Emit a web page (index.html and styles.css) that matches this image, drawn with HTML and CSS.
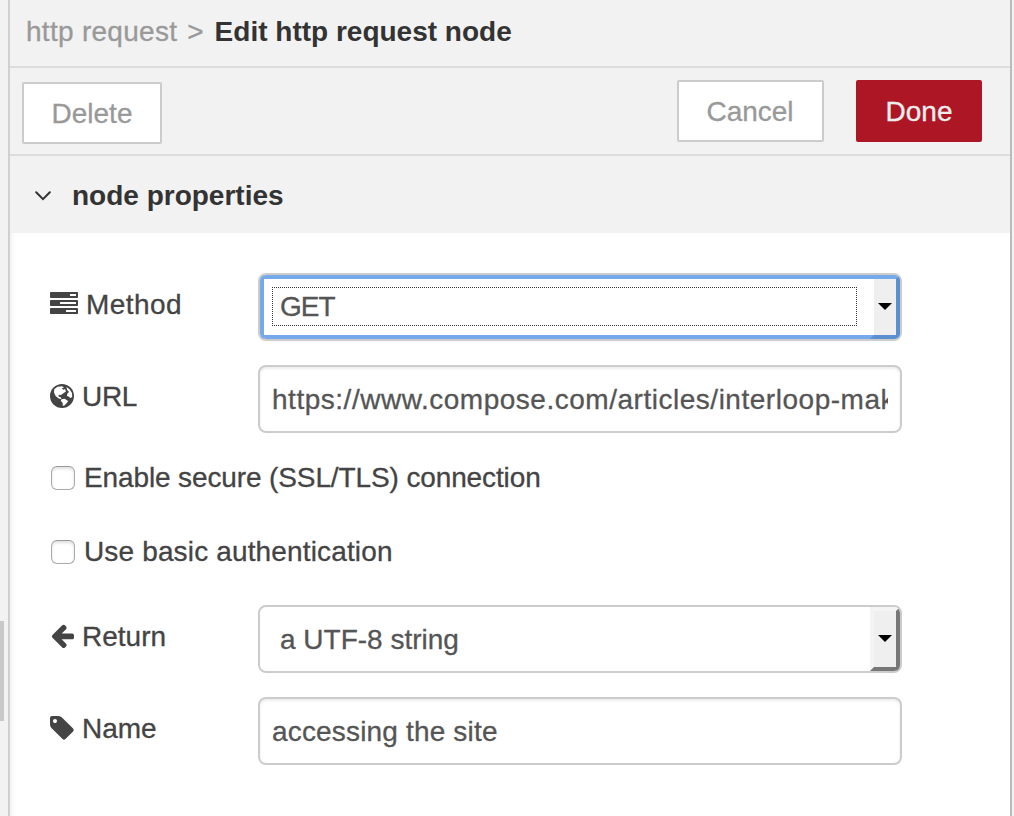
FILE: index.html
```html
<!DOCTYPE html>
<html lang="en">
<head>
<meta charset="utf-8">
<title>Edit http request node</title>
<link rel="stylesheet" href="styles.css">
</head>
<body>
<div class="app">
  <aside class="gutter"><div class="handle"></div></aside>
  <main class="tray">
    <header class="crumbs"><span class="crumb t-http">http request</span><span class="crumb sep">&gt;</span><span class="current">Edit http request node</span></header>
    <div class="toolbar">
      <button class="btn delete">Delete</button>
      <button class="btn cancel">Cancel</button>
      <button class="btn done">Done</button>
    </div>
    <div class="section">
      <svg class="chevron" viewBox="0 0 16 10"><path d="M1.2 1.3L8 8.2L14.8 1.3"/></svg>
      <span class="section-title">node properties</span>
    </div>
    <form class="form">
      <div class="row">
        <div class="label"><svg class="icon wide" viewBox="0 0 1792 1792"><path d="M1024 1408h640v-128h-640v128zm-384-512h1024v-128h-1024v128zm640-512h384v-128h-384v128zm512 832v256q0 26-19 45t-45 19h-1664q-26 0-45-19t-19-45v-256q0-26 19-45t45-19h1664q26 0 45 19t19 45zm0-512v256q0 26-19 45t-45 19h-1664q-26 0-45-19t-19-45v-256q0-26 19-45t45-19h1664q26 0 45 19t19 45zm0-512v256q0 26-19 45t-45 19h-1664q-26 0-45-19t-19-45v-256q0-26 19-45t45-19h1664q26 0 45 19t19 45z"/></svg><span class="t-method">Method</span></div>
        <div class="select focused"><div class="value"><span class="t-get">GET</span></div><div class="arrow"><i class="caret"></i></div></div>
      </div>
      <div class="row">
        <div class="label"><svg class="icon" viewBox="0 0 24 24"><circle cx="12" cy="12" r="12"/><path class="land" d="M4.2 5.2L7.5 2.8L12 2.2L14 3.4L11.6 4.6L13.4 5.8L15 5L16 7.4L13.4 9.2L11 11L8.6 10.8L8.6 12.4L10.8 13.2L11.4 15L8.6 14.4L5.6 12L4 8.6Z"/><path class="land" d="M16.4 3L19.6 5.2L22 9L22.2 13L20.4 14L18.6 12.4L17 12L17.4 9.4L19 8L17.2 6Z"/><path class="land" d="M11.4 15.2L14.6 14.8L18.2 17L16.4 19.4L14.4 21.4L12.6 21.8L12.8 19L10.8 17Z"/></svg><span class="t-url">URL</span></div>
        <div class="input"><span class="clip t-link">https://www.compose.com/articles/interloop-mak</span></div>
      </div>
      <div class="check first"><span class="box"></span><span class="t-ssl">Enable secure (SSL/TLS) connection</span></div>
      <div class="check second"><span class="box"></span><span class="t-auth">Use basic authentication</span></div>
      <div class="row">
        <div class="label"><svg class="icon" viewBox="64 128 1600 1600"><path d="M1664 896v128q0 53-32.5 90.5t-84.5 37.5h-704l293 294q38 36 38 90t-38 90l-75 76q-37 37-90 37-52 0-91-37l-651-652q-37-37-37-90 0-52 37-91l651-650q38-38 91-38 52 0 90 38l75 74q38 38 38 91t-38 91l-293 293h704q52 0 84.5 37.5t32.5 90.5z"/></svg><span class="t-return">Return</span></div>
        <div class="select"><div class="value"><span class="t-utf">a UTF-8 string</span></div><div class="arrow"><i class="caret"></i></div></div>
      </div>
      <div class="row">
        <div class="label"><svg class="icon" viewBox="128 128 1536 1536"><path d="M576 448q0-53-37.5-90.5t-90.5-37.5-90.5 37.5-37.5 90.5 37.5 90.5 90.5 37.5 90.5-37.5 37.5-90.5zm1067 576q0 53-37 90l-491 492q-39 37-91 37-53 0-90-37l-715-716q-38-37-64.5-101t-26.5-117v-416q0-52 38-90t90-38h416q53 0 117 26.5t102 64.5l715 714q37 39 37 91z"/></svg><span class="t-name">Name</span></div>
        <div class="input"><span class="clip t-site">accessing the site</span></div>
      </div>
    </form>
  </main>
  <div class="edge"></div>
</div>
</body>
</html>
```
FILE: styles.css
```css
* { box-sizing: border-box; }
body { margin: 0; font: 28px/34px "Liberation Sans", Arial, sans-serif; color: #444; background: #fff; -webkit-text-stroke: .3px; }
.app { display: flex; width: 1014px; height: 816px; overflow: hidden; }
.gutter { width: 10px; background: #f2f2f2; border-right: 2px solid #d0d0d0; padding-top: 621px; }
.handle { width: 4px; height: 100px; background: #c8c8c8; }
.tray { flex: 1; box-shadow: inset 6px 0 6px -5px rgba(0,0,0,.08); }
.edge { width: 4px; background: #f2f2f2; border-left: 2px solid #bbb; }
.crumbs { height: 68px; padding: 15px 0 0 16px; background: #f2f2f2; border-bottom: 2px solid #ddd; display: flex; white-space: nowrap; }
.crumb { color: #999; }
.sep { margin: 0 11px 0 10px; }
.current, .section-title { font-weight: bold; color: #333; -webkit-text-stroke: 0; }
.toolbar { height: 88px; padding: 12px 28px 0 12px; background: #f2f2f2; border-bottom: 2px solid #ddd; display: flex; }
.btn { height: 62px; padding: 1px 0 0; border: 2px solid #ccc; border-radius: 2px; background: #fff; color: #999; font: inherit; -webkit-text-stroke: .3px; }
.delete { width: 140px; margin-top: 2px; }
.cancel { width: 147px; margin-left: auto; padding-right: 1px; }
.done { width: 126px; margin-left: 32px; background: #ad1625; border-color: #ad1625; color: #eee; }
.section { height: 77px; padding: 2px 0 0 25px; background: #f2f2f2; display: flex; align-items: center; }
.chevron { width: 16px; height: 10px; margin-right: 21px; fill: none; stroke: #333; stroke-width: 2; stroke-linecap: round; }
.form { padding: 40px 0 0 40px; }
.row { display: flex; height: 68px; margin-bottom: 24px; }
.label { width: 208px; height: 62px; display: flex; align-items: center; white-space: nowrap; }
.label span { padding-top: 2px; }
.icon { width: 24px; height: 24px; margin-right: 8px; fill: #444; flex: none; }
.icon.wide { width: 28px; height: 28px; }
.land { fill: #fff; }
.input, .select { width: 644px; height: 68px; border: 2px solid #ccc; border-radius: 8px; background: #fff; color: #555; white-space: nowrap; }
.input { padding: 16px 12px 12px; box-shadow: inset 0 2px 3px rgba(0,0,0,.075); }
.clip { display: block; overflow: hidden; }
.select { display: flex; overflow: hidden; position: relative; }
.value { flex: 1; padding: 16px 0 0 20px; }
.arrow { width: 30px; border: 4px solid; border-color: #f4f4f4 #777 #777 #f4f4f4; background: #efefef; display: flex; align-items: center; justify-content: center; }
.caret { margin-top: -2px; border: 7px solid transparent; border-top-color: #000; border-bottom: 0; }
.focused .value { margin: 12px 13px 13px 12px; padding: 2px 0 0 7px; border: 1px dotted #333; }
.focused::after { content: ""; position: absolute; inset: 0; border: 4px solid #76a9ea; border-right-color: #5a8fd0; border-radius: 4px; }
.focused .arrow { border-color: #76a9ea #5a8fd0 #5a8fd0 transparent; background-clip: padding-box; position: relative; z-index: 1; border-radius: 0 4px 4px 0; }
.check { display: flex; align-items: center; height: 24px; white-space: nowrap; }
.box { width: 24px; height: 24px; margin: 0 9px 0 1px; border: 1px solid #aaa; border-top-color: #999; border-radius: 6px; background: #fff; box-shadow: inset 0 2px 3px rgba(0,0,0,.12); }
.first { margin: 33px 0 50px; }
.second { margin-bottom: 41px; }
.t-http { letter-spacing: .28px; }
.t-method { letter-spacing: .45px; }
.t-get { letter-spacing: -1px; }
.t-url { letter-spacing: -.3px; }
.t-link { letter-spacing: .52px; }
.t-ssl { letter-spacing: -.12px; }
.t-auth { letter-spacing: .15px; }
.t-site { letter-spacing: .17px; }
```
